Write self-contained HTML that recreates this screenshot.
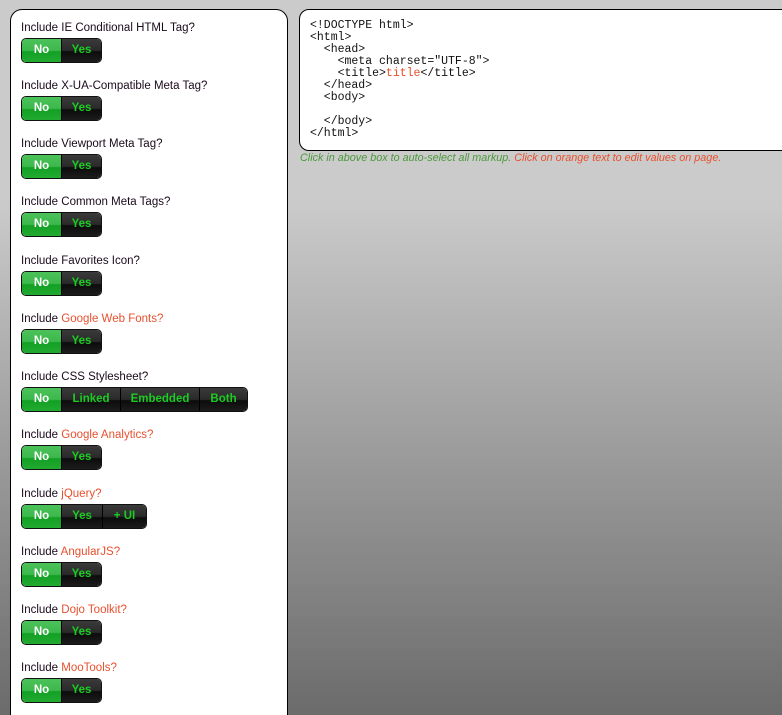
<!DOCTYPE html>
<html><head><meta charset="UTF-8"><style>
html,body{margin:0;padding:0;overflow:hidden}
body{width:782px;height:715px;overflow:hidden;position:relative;background:linear-gradient(#cbcbcb 0,#cbcbcb 200px,#6b6b6b 715px);font-family:"Liberation Sans",sans-serif}
#left{position:absolute;left:10px;top:9px;width:276px;height:720px;background:#fff;border:1px solid #000;border-radius:12px}
.row{position:absolute;left:10px}
.lbl{font-size:11.5px;color:#1a0a1a;height:16px;line-height:16px}
.lbl span{color:#e8502e}
.bg{display:flex;margin-top:2px;height:25px;box-sizing:border-box;border:1px solid #111;border-radius:5px;overflow:hidden;width:max-content}
.bg div{height:23px;line-height:23px;text-align:center;font-size:11.5px;font-weight:bold;color:#1ccc22;background:linear-gradient(#3a3a3a 0,#2a2a2a 50%,#0c0c0c 55%,#1c1c1c 100%);border-left:1px solid #000;box-sizing:border-box}
.bg div.on{color:#fff;background:linear-gradient(#4cc25a 0,#3cb84c 50%,#12a024 55%,#22aa30 100%);border-left:none}
#code{position:absolute;left:299px;top:9px;width:500px;height:140px;background:#fff;border:1px solid #000;border-radius:10px}
pre{margin:0;position:absolute;left:10px;top:10px;font-family:"Liberation Mono",monospace;font-size:11.5px;line-height:12px;color:#111}
pre span{color:#e8502e}
#note{position:absolute;left:300px;top:152px;font-size:10.8px;font-style:italic;color:#4a9a3a}
#note span{color:#e8502e}
</style></head><body>
<div id="left">
<div class="row" style="top:10px"><div class="lbl">Include IE Conditional HTML Tag?</div><div class="bg"><div class="on" style="width:39px">No</div><div style="width:40px">Yes</div></div></div>
<div class="row" style="top:68px"><div class="lbl">Include X-UA-Compatible Meta Tag?</div><div class="bg"><div class="on" style="width:39px">No</div><div style="width:40px">Yes</div></div></div>
<div class="row" style="top:126px"><div class="lbl">Include Viewport Meta Tag?</div><div class="bg"><div class="on" style="width:39px">No</div><div style="width:40px">Yes</div></div></div>
<div class="row" style="top:184px"><div class="lbl">Include Common Meta Tags?</div><div class="bg"><div class="on" style="width:39px">No</div><div style="width:40px">Yes</div></div></div>
<div class="row" style="top:243px"><div class="lbl">Include Favorites Icon?</div><div class="bg"><div class="on" style="width:39px">No</div><div style="width:40px">Yes</div></div></div>
<div class="row" style="top:301px"><div class="lbl">Include <span>Google Web Fonts?</span></div><div class="bg"><div class="on" style="width:39px">No</div><div style="width:40px">Yes</div></div></div>
<div class="row" style="top:359px"><div class="lbl">Include CSS Stylesheet?</div><div class="bg"><div class="on" style="width:39px">No</div><div style="width:59px">Linked</div><div style="width:79px">Embedded</div><div style="width:48px">Both</div></div></div>
<div class="row" style="top:417px"><div class="lbl">Include <span>Google Analytics?</span></div><div class="bg"><div class="on" style="width:39px">No</div><div style="width:40px">Yes</div></div></div>
<div class="row" style="top:476px"><div class="lbl">Include <span>jQuery?</span></div><div class="bg"><div class="on" style="width:39px">No</div><div style="width:41px">Yes</div><div style="width:44px">+ UI</div></div></div>
<div class="row" style="top:534px"><div class="lbl">Include <span>AngularJS?</span></div><div class="bg"><div class="on" style="width:39px">No</div><div style="width:40px">Yes</div></div></div>
<div class="row" style="top:592px"><div class="lbl">Include <span>Dojo Toolkit?</span></div><div class="bg"><div class="on" style="width:39px">No</div><div style="width:40px">Yes</div></div></div>
<div class="row" style="top:650px"><div class="lbl">Include <span>MooTools?</span></div><div class="bg"><div class="on" style="width:39px">No</div><div style="width:40px">Yes</div></div></div>
</div>
<div id="code"><pre>&lt;!DOCTYPE html&gt;
&lt;html&gt;
  &lt;head&gt;
    &lt;meta charset="UTF-8"&gt;
    &lt;title&gt;<span>title</span>&lt;/title&gt;
  &lt;/head&gt;
  &lt;body&gt;

  &lt;/body&gt;
&lt;/html&gt;</pre></div>
<div id="note">Click in above box to auto-select all markup. <span>Click on orange text to edit values on page.</span></div>
</body></html>
